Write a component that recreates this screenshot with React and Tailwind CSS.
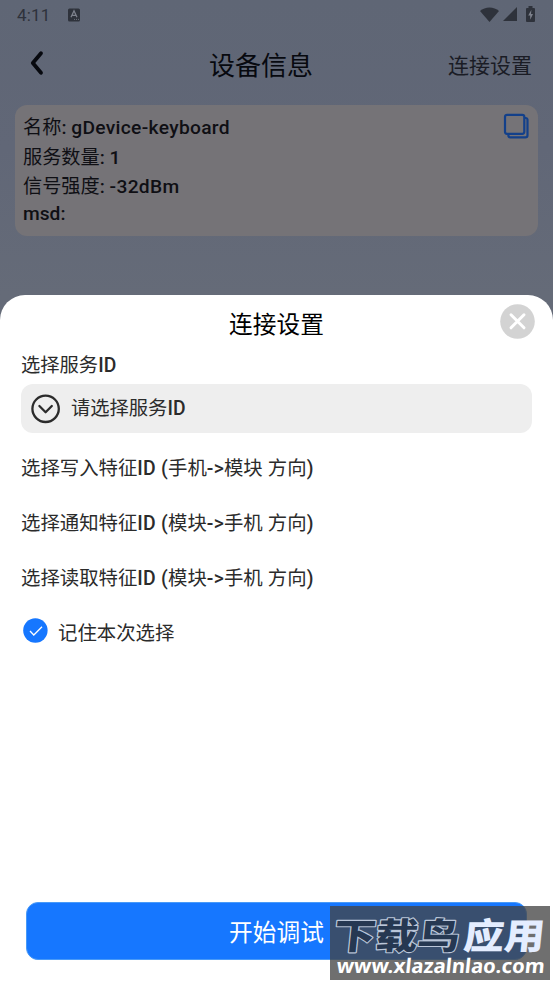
const characteristics = [
  "选择写入特征ID (手机->模块 方向)",
  "选择通知特征ID (模块->手机 方向)",
  "选择读取特征ID (模块->手机 方向)",
];

export default function App() {
  return (
    <div className="relative flex h-[984px] w-[553px] flex-col overflow-hidden bg-gradient-to-b from-[#5f6675] via-[#616777] via-15% to-[#656b78] to-30% font-['Roboto','Noto_Sans_CJK_SC',sans-serif] text-[#2b2b2b]">
      <StatusBar />

      {/* Page header */}
      <header className="grid h-[73px] grid-cols-3 items-center pr-[21px] pb-[5px] pl-[28px] text-[#07090f]">
        <svg className="-mt-[7px] h-7 w-5" viewBox="0 0 20 28" fill="none" stroke="currentColor" strokeWidth="3.8" strokeLinecap="round" strokeLinejoin="round">
          <path d="M13 4.3 4.8 14 13 23.7" />
        </svg>
        <h1 className="-ml-[38px] text-center text-[26px] leading-8 whitespace-nowrap">设备信息</h1>
        <span className="text-right text-[21px] leading-8 text-[#1a1c25]">连接设置</span>
      </header>

      {/* Device card */}
      <section className="mx-[15px] flex h-[131px] shrink-0 justify-between rounded-[12px] bg-[#757377] pt-[7px] pr-[8px] pl-[8px] text-[19.2px] font-medium text-[#0f0f14]">
        <div>
          <InfoRow label="名称" value="gDevice-keyboard" />
          <InfoRow label="服务数量" value="1" />
          <InfoRow label="信号强度" value="-32dBm" />
          <p className="h-[27px] leading-[26px]">msd:</p>
        </div>
        <svg className="h-[28px] w-[28px]" viewBox="0 0 28 28" fill="none" stroke="#13408a" strokeWidth="2.2" strokeLinejoin="round">
          <rect x="3" y="2.8" width="19.3" height="19" rx="2" />
          <path d="M22.5 6h1.2a1.8 1.8 0 0 1 1.8 1.8v15.4a2.2 2.2 0 0 1-2.2 2.2H8.2a1.8 1.8 0 0 1-1.8-1.8v-1.3" />
        </svg>
      </section>

      {/* Connection sheet */}
      <main className="mt-[59px] flex h-[689px] shrink-0 flex-col rounded-t-[25px] bg-white px-[21px]">
        <div className="grid h-[55px] grid-cols-3 items-center">
          <span />
          <h2 className="mt-[4px] text-center text-[23.7px] leading-8 whitespace-nowrap text-black">连接设置</h2>
          <svg className="-mt-[2px] -mr-[3px] h-[35px] w-[35px] justify-self-end" viewBox="0 0 35 35">
            <circle cx="17.5" cy="17.5" r="17.3" fill="#d3d3d3" />
            <path d="m11 10.8 13 13M24 10.8l-13 13" stroke="white" strokeWidth="3" strokeLinecap="round" />
          </svg>
        </div>

        <p className="pt-[2px] text-[19.3px] leading-7 font-medium"><Zh>选择服务ID</Zh></p>
        <div className="mt-[4px] flex h-[49px] items-center rounded-[12px] bg-[#eeeeee] pl-[10px]">
          <svg className="h-[30px] w-[30px]" viewBox="0 0 30 30" fill="none" stroke="#2b2b2b" strokeWidth="2.3" strokeLinecap="round" strokeLinejoin="round">
            <circle cx="14.6" cy="14.8" r="13.2" />
            <path d="m8.4 12 6.2 6.2 6.2-6.2" />
          </svg>
          <span className="mt-[2px] ml-[10px] text-[19.3px] font-medium"><Zh>请选择服务ID</Zh></span>
        </div>

        <div className="mt-[8px]">
          {characteristics.map((label) => (
            <p key={label} className="h-[55px] text-[19.4px] leading-[55px] font-medium whitespace-nowrap"><Zh>{label}</Zh></p>
          ))}
        </div>

        <label className="flex h-[55px] items-center text-[19.4px]">
          <svg className="-mt-[6px] ml-[2px] h-[25px] w-[25px]" viewBox="0 0 25 25" fill="none">
            <circle cx="12.4" cy="12.5" r="12.2" fill="#1677ff" />
            <path d="m7 13 3.8 4 8.2-8.3" stroke="white" strokeWidth="1.3" />
          </svg>
          <span className="ml-[10px]">记住本次选择</span>
        </label>

        <button className="mx-[5px] mt-auto mb-[24px] h-[58px] rounded-[12px] border border-[#489af8] bg-[#1677ff] pt-[6px] text-[23.7px] leading-none text-white">
          开始调试
        </button>
      </main>

      <Watermark />
    </div>
  );
}

function StatusBar() {
  return (
    <div className="flex h-[32px] shrink-0 items-center justify-between pr-[18px] pb-[2px] pl-[17px] text-[#2e323b]">
      <div className="flex items-center">
        <span className="text-[17px] leading-5 tracking-[0.2px]">4:11</span>
        <svg className="ml-[17px] h-[14px] w-[12px]" viewBox="0 0 12 14">
          <rect width="12" height="13" y=".5" rx="1.5" fill="currentColor" />
          <path d="m3 9.3 3-6.5 3 6.5M4 7.3h4" fill="none" stroke="#7d818c" strokeWidth="1.3" />
          <path d="M6 11.4h1M8 11.4h1M10 11.4h1" stroke="#7d818c" strokeWidth=".8" />
        </svg>
      </div>
      <div className="-mt-[2px] flex items-center">
        <svg className="h-[15px] w-[19px]" viewBox="0 0 19 15" fill="currentColor">
          <path d="M0 4C5-.7 14-.7 19 4L9.5 15Z" />
        </svg>
        <svg className="ml-[4px] h-[14px] w-[14px]" viewBox="0 0 14 14" fill="currentColor">
          <path d="M14 0v14H0Z" />
        </svg>
        <svg className="ml-[9px] h-[16px] w-[9px]" viewBox="0 0 9 16">
          <path d="M2.5 0h4v2H8a1 1 0 0 1 1 1v12a1 1 0 0 1-1 1H1a1 1 0 0 1-1-1V3a1 1 0 0 1 1-1h1.5Z" fill="currentColor" />
          <path d="M5.4 3.7 2.2 9.4h2v4.3L7 8h-2Z" fill="#7d818c" />
        </svg>
      </div>
    </div>
  );
}

function InfoRow({ label, value }) {
  return (
    <p className="h-[29.5px] leading-[31px] whitespace-nowrap">
      <span className="font-normal">{label}</span>: <span className="tracking-[0.32px]">{value}</span>
    </p>
  );
}

// Chinese glyphs keep the regular weight while latin text stays medium
function Zh({ children }) {
  return children.split(/([\u4e00-\u9fff]+)/).map((part, i) => (
    <span key={i} className={i % 2 ? "font-normal" : "tracking-[0.25px]"}>{part}</span>
  ));
}

function Watermark() {
  return (
    <div className="absolute top-[906px] left-[330px] h-[74px] w-[220px] bg-[#444444]/77">
      <svg className="h-full w-full" viewBox="0 0 220 74">
        <g fontFamily="Noto Sans CJK SC, sans-serif" fontWeight="900" fontSize="36" transform="skewX(-6)">
          <text x="7" y="43" textLength="126" lengthAdjust="spacingAndGlyphs" fill="#263852" stroke="#bac6d9" strokeWidth="2.2" paintOrder="stroke" strokeLinejoin="round">下载鸟</text>
          <text x="137" y="43" textLength="81" lengthAdjust="spacingAndGlyphs" fill="#e4edff">应用</text>
        </g>
        <text x="13" y="67" textLength="208" lengthAdjust="spacingAndGlyphs" fill="white" fontFamily="Noto Sans, sans-serif" fontWeight="700" fontSize="20" transform="skewX(-6)">www.xlazalnlao.com</text>
      </svg>
    </div>
  );
}
